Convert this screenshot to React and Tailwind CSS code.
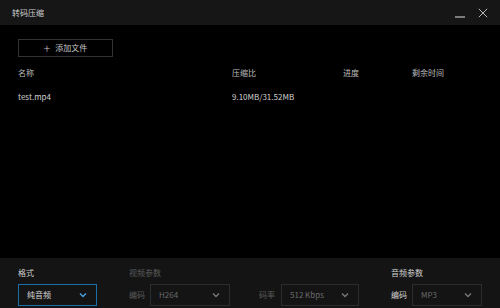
import React from "react";

const font = { fontFamily: '"Noto Sans CJK SC", "Noto Sans", sans-serif' };

function Chevron({ className }) {
  return (
    <svg viewBox="0 0 10 10" className={className} fill="none" stroke="currentColor" strokeWidth="1.4">
      <path d="M2 3.5 L5 6.5 L8 3.5" />
    </svg>
  );
}

function Select({ value, active, width, dim }) {
  return (
    <div
      className={`h-[22px] ${width} flex items-center justify-between px-[8px] border ${
        active ? "border-[#1c6ea8] text-[#d8d8d8]" : "border-[#2c2c2c] text-[#6a6a6a]"
      } ${dim ? "text-[#555]" : ""}`}
    >
      <span className="text-[8px]">{value}</span>
      <Chevron className={`w-[10px] h-[10px] ${active ? "text-[#4aa0dc]" : "text-[#777]"}`} />
    </div>
  );
}

export default function App() {
  return (
    <div className="w-[500px] h-[308px] bg-black flex flex-col overflow-hidden" style={font}>
      <div className="h-[25px] bg-[#161616] flex items-center justify-between pl-[12px] pr-[12px] shrink-0">
        <span className="text-[8px] text-[#d0d0d0]">转码压缩</span>
        <div className="flex items-center gap-[12px]">
          <svg viewBox="0 0 12 12" className="w-[12px] h-[12px] mt-[4px]" stroke="#aaa" strokeWidth="1.4">
            <path d="M1 8 H11" />
          </svg>
          <svg viewBox="0 0 12 12" className="w-[10px] h-[10px]" stroke="#bbb" strokeWidth="1.2">
            <path d="M1 1 L11 11 M11 1 L1 11" />
          </svg>
        </div>
      </div>

      <div className="flex-1 px-[18px] pt-[14px]">
        <button className="w-[95px] h-[18px] border border-[#333] flex items-center justify-center gap-[5px] text-[#c8c8c8]">
          <span className="text-[12px] leading-none font-light">+</span>
          <span className="text-[8px]">添加文件</span>
        </button>
        <div className="grid grid-cols-[214px_111px_69px_1fr] text-[8px] text-[#bdbdbd] mt-[10px]">
          <span>名称</span>
          <span>压缩比</span>
          <span>进度</span>
          <span>剩余时间</span>
        </div>
        <div className="grid grid-cols-[214px_111px_69px_1fr] text-[8px] text-[#d0d0d0] mt-[12px]">
          <span>test.mp4</span>
          <span>9.10MB/31.52MB</span>
          <span></span>
          <span></span>
        </div>
      </div>

      <div className="h-[50px] bg-[#141414] shrink-0 px-[18px] pt-[10px] flex">
        <div className="w-[111px] flex flex-col gap-[6px]">
          <span className="text-[8px] text-[#d0d0d0] leading-[10px]">格式</span>
          <Select value="纯音频" active width="w-[79px]" />
        </div>
        <div className="w-[262px] flex flex-col gap-[6px]">
          <span className="text-[8px] text-[#5a5a5a] leading-[10px]">视频参数</span>
          <div className="flex items-center">
            <span className="text-[8px] text-[#5a5a5a] w-[21px]">编码</span>
            <Select value="H264" width="w-[80px]" />
            <span className="text-[8px] text-[#5a5a5a] ml-[29px] w-[22px]">码率</span>
            <Select value="512 Kbps" width="w-[78px]" />
          </div>
        </div>
        <div className="flex flex-col gap-[6px]">
          <span className="text-[8px] text-[#d0d0d0] leading-[10px]">音频参数</span>
          <div className="flex items-center">
            <span className="text-[8px] text-[#d0d0d0] w-[21px]">编码</span>
            <Select value="MP3" width="w-[70px]" />
          </div>
        </div>
      </div>
    </div>
  );
}
